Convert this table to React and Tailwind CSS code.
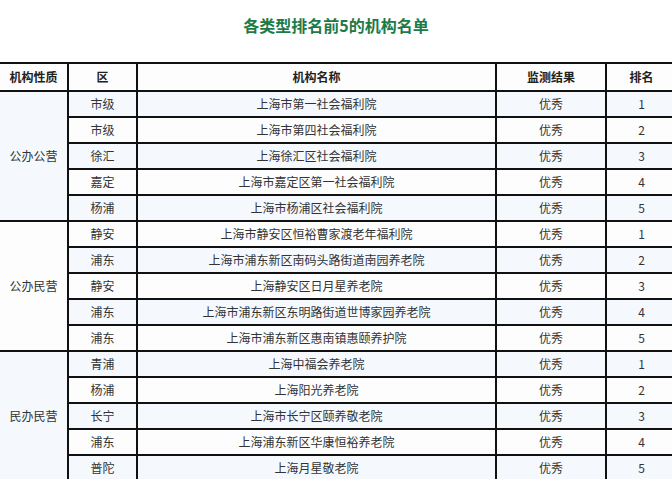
const groups = [
  {
    type: "公办公营",
    rows: [
      ["市级", "上海市第一社会福利院"],
      ["市级", "上海市第四社会福利院"],
      ["徐汇", "上海徐汇区社会福利院"],
      ["嘉定", "上海市嘉定区第一社会福利院"],
      ["杨浦", "上海市杨浦区社会福利院"],
    ],
  },
  {
    type: "公办民营",
    rows: [
      ["静安", "上海市静安区恒裕曹家渡老年福利院"],
      ["浦东", "上海市浦东新区南码头路街道南园养老院"],
      ["静安", "上海静安区日月星养老院"],
      ["浦东", "上海市浦东新区东明路街道世博家园养老院"],
      ["浦东", "上海市浦东新区惠南镇惠颐养护院"],
    ],
  },
  {
    type: "民办民营",
    rows: [
      ["青浦", "上海中福会养老院"],
      ["杨浦", "上海阳光养老院"],
      ["长宁", "上海市长宁区颐养敬老院"],
      ["浦东", "上海浦东新区华康恒裕养老院"],
      ["普陀", "上海月星敬老院"],
    ],
  },
];

export default function App() {
  let idx = 0;
  return (
    <div
      className="w-[672px] h-[479px] overflow-hidden bg-white text-[#333]"
      style={{ fontFamily: '"Noto Sans CJK SC", "Noto Sans", sans-serif' }}
    >
      <h1 className="pt-[14px] h-[62px] text-center text-[16px] leading-[22px] font-bold text-[#1d7a48]">
        各类型排名前5的机构名单
      </h1>
      <table className="ml-[-2px] w-[678px] border-collapse table-fixed text-[12px]">
        <colgroup>
          <col className="w-[69px]" />
          <col className="w-[69px]" />
          <col className="w-[359px]" />
          <col className="w-[110px]" />
          <col className="w-[71px]" />
        </colgroup>
        <thead>
          <tr className="h-[28px] bg-[#fdfdfd]">
            {["机构性质", "区", "机构名称", "监测结果", "排名"].map((h) => (
              <th
                key={h}
                className="border-2 border-[#111] p-0 text-center font-bold text-[#222] leading-[16px]"
              >
                {h}
              </th>
            ))}
          </tr>
        </thead>
        <tbody>
          {groups.map((g) =>
            g.rows.map((r, i) => {
              const bg = idx % 2 === 0 ? "bg-[#f5f9fe]" : "bg-[#fdfdfd]";
              idx++;
              return (
                <tr key={g.type + i} className={"h-[26px] " + bg}>
                  {i === 0 && (
                    <td
                      rowSpan={5}
                      className="border-2 border-[#111] p-0 text-center leading-[16px]"
                    >
                      {g.type}
                    </td>
                  )}
                  <td className="border-2 border-[#111] p-0 text-center leading-[16px]">
                    {r[0]}
                  </td>
                  <td className="border-2 border-[#111] p-0 text-center leading-[16px]">
                    {r[1]}
                  </td>
                  <td className="border-2 border-[#111] p-0 text-center leading-[16px]">
                    优秀
                  </td>
                  <td className="border-2 border-[#111] p-0 text-center leading-[16px]">
                    {i + 1}
                  </td>
                </tr>
              );
            })
          )}
        </tbody>
      </table>
    </div>
  );
}
